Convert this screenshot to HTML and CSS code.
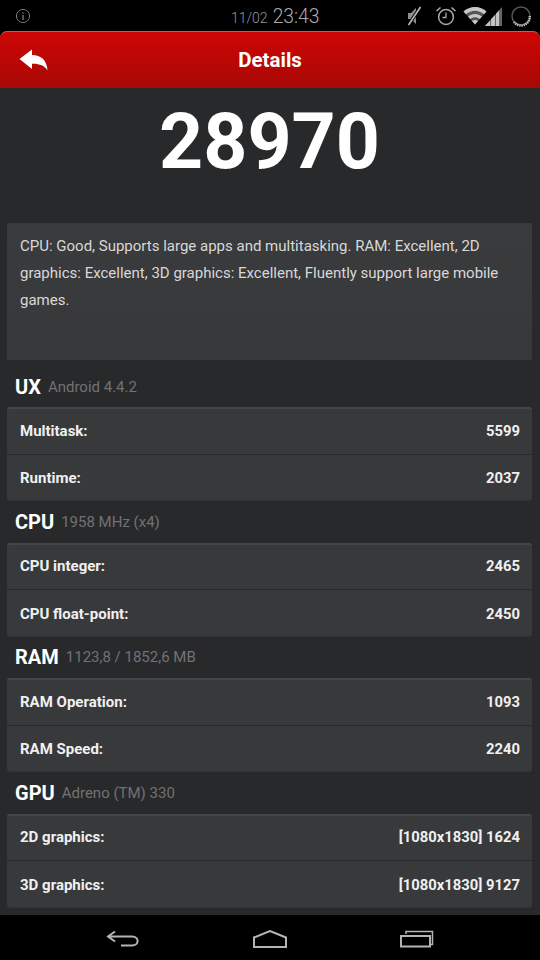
FILE: index.html
```html
<!DOCTYPE html>
<html lang="en">
<head>
<meta charset="utf-8">
<title>Details</title>
<link rel="stylesheet" href="styles.css">
</head>
<body>
<div class="phone">
  <div class="status">
    <svg class="info" viewBox="0 0 16 16" width="16" height="16"><circle cx="8" cy="8" r="6.6" fill="none" stroke="#777" stroke-width="1"/><rect x="7.4" y="7" width="1.2" height="5" fill="#888"/><rect x="7.4" y="4.4" width="1.2" height="1.3" fill="#888"/></svg>
    <div class="clock"><span class="date">11/02</span><span class="time">23:43</span></div>
    <div class="status-icons">
      <svg class="mute" viewBox="0 0 18 22" width="18" height="22"><path d="M3 8h3l5-5v16l-5-5H3z" fill="#8e8e8e"/><path d="M15.500 2 3.500 20" stroke="#000" stroke-width="3.500"/><path d="M15.500 2 3.500 20" stroke="#bbb" stroke-width="1.600"/></svg>
      <svg class="alarm" viewBox="0 0 22 22" width="22" height="22"><circle cx="11" cy="12" r="7.400" fill="none" stroke="#aaa" stroke-width="1.500"/><path d="M11 7.500V12.500H7.500" fill="none" stroke="#aaa" stroke-width="1.300"/><path d="M1.500 6 5.500 2.500M20.500 6 16.500 2.500" stroke="#aaa" stroke-width="1.600"/></svg>
      <svg viewBox="0 0 24 20" width="24" height="20"><path d="M0.500 5.500C7 -0.500 17 -0.500 23.500 5.500L12 18.500z" fill="#555"/><path d="M0.500 5.500C7 -0.500 17 -0.500 23.500 5.500L21 8.300C15.500 3.500 8.500 3.500 3 8.300zM5 10.500C9 7 15 7 19 10.500L16.800 13C13.800 10.500 10.200 10.500 7.200 13zM9 15C10.800 13.700 13.200 13.700 15 15L12 18.500z" fill="#c8c8c8"/></svg>
      <svg class="signal" viewBox="0 0 17 20" width="17" height="20"><path d="M0 20 17 1V20z" fill="#666"/><path d="M0 20 5 14.500V20zM6 20V13.300L10 9V20zM11 20V7.800L14 4.500V20z" fill="#c4c4c4"/></svg>
      <svg class="battery" viewBox="0 0 22 22" width="22" height="22"><circle cx="11" cy="11" r="9" fill="none" stroke="#555" stroke-width="1.500"/><path d="M19.800 11A8.800 8.800 0 0 1 4 17" fill="none" stroke="#c8c8c8" stroke-width="2.400" stroke-dasharray="1.300 .8"/></svg>
    </div>
  </div>
  <header class="appbar">
    <svg class="back" viewBox="0 0 30 22" width="30" height="22"><path d="M.5 10 13 .5V6C22 6 28 11 28.500 21.500 25.500 16.500 20 14.500 13 14.800V20z" fill="#fff"/></svg>
    <h1>Details</h1>
  </header>
  <main class="content">
    <div class="score">28970</div>
    <div class="summary">CPU: Good, Supports large apps and multitasking. RAM: Excellent, 2D graphics: Excellent, 3D graphics: Excellent, Fluently support large mobile games.</div>

    <div class="section first"><span class="name">UX</span><span class="sub">Android 4.4.2</span></div>
    <div class="card">
      <div class="row"><span>Multitask:</span><span class="val">5599</span></div>
      <div class="row"><span>Runtime:</span><span class="val">2037</span></div>
    </div>

    <div class="section"><span class="name">CPU</span><span class="sub">1958 MHz (x4)</span></div>
    <div class="card">
      <div class="row"><span>CPU integer:</span><span class="val">2465</span></div>
      <div class="row"><span>CPU float-point:</span><span class="val">2450</span></div>
    </div>

    <div class="section"><span class="name">RAM</span><span class="sub">1123,8 / 1852,6 MB</span></div>
    <div class="card">
      <div class="row"><span>RAM Operation:</span><span class="val">1093</span></div>
      <div class="row"><span>RAM Speed:</span><span class="val">2240</span></div>
    </div>

    <div class="section"><span class="name">GPU</span><span class="sub">Adreno (TM) 330</span></div>
    <div class="card">
      <div class="row"><span>2D graphics:</span><span class="val">[1080x1830] 1624</span></div>
      <div class="row"><span>3D graphics:</span><span class="val">[1080x1830] 9127</span></div>
    </div>
  </main>
  <nav class="navbar">
    <svg viewBox="0 0 34 18" width="34" height="18"><path d="M9 1.500 2 6.500 9 11.500M2.500 6.500H26C33.500 6.500 33.500 15.500 26 15.500H15" fill="none" stroke="#b4b4b4" stroke-width="2"/></svg>
    <svg viewBox="0 0 34 18" width="34" height="18"><path d="M1 17V7.500L17 1 33 7.500V17z" fill="none" stroke="#b4b4b4" stroke-width="2"/></svg>
    <svg viewBox="0 0 34 18" width="34" height="18"><path d="M6 4V1.500H32.500V14.500H30" fill="none" stroke="#b4b4b4" stroke-width="1.500"/><rect x="1" y="6" width="29" height="10.500" fill="none" stroke="#b4b4b4" stroke-width="2"/></svg>
  </nav>
</div>
</body>
</html>
```
FILE: styles.css
```css
* { box-sizing: border-box; }
html, body { margin: 0; padding: 0; background: #000; }
body { font-family: Roboto, "Noto Sans", sans-serif; }
.phone { width: 540px; height: 960px; display: flex; flex-direction: column; overflow: hidden; background: #000; }

.status { height: 31px; flex: none; display: flex; align-items: center; padding: 0 8px 0 15px; position: relative; }
.clock { position: absolute; left: 231px; top: 5px; display: flex; align-items: baseline; gap: 5px; color: #999; font-weight: 300; }
.date { font-size: 14px; }
.time { font-size: 19.300px; color: #aaa; }
.status-icons { margin-left: auto; display: flex; align-items: center; gap: 7px; }
.status-icons .mute { margin-right: 5px; }
.status-icons .alarm { margin-right: -1px; }
.status-icons .signal { margin-left: -9px; }
.status-icons .battery { margin-left: 1px; }

.appbar { height: 57px; flex: none; display: flex; align-items: center; justify-content: center; position: relative; border-radius: 7px 7px 0 0; border-top: 1px solid #c85a5a; background: linear-gradient(#cd0606, #a80804); }
.appbar h1 { margin: 0; color: #fff; font-size: 20.500px; font-weight: 700; }
.back { position: absolute; left: 19px; top: 17px; }

.content { flex: 1; min-height: 0; background: #28292b; padding: 0 8px 0 7px; }
.score { height: 135px; padding-top: 10px; text-align: center; color: #fff; font-size: 77px; line-height: 88px; font-weight: 700; }
.summary { height: 137px; padding: 10px 13px; background: linear-gradient(#3a3b3d, #37383a); color: #d8d8d8; font-size: 15px; line-height: 27px; border-radius: 2px 2px 0 0; }

.section { height: 41.500px; padding: 0 8px; display: flex; align-items: center; gap: 7px; }
.section.first { height: 47px; padding-top: 7px; }
.name { color: #fff; font-size: 20px; font-weight: 700; }
.sub { color: #717274; font-size: 15px; }

.card { height: 94px; border-radius: 3px; background: #38393b; box-shadow: inset 0 2px 0 #444547, inset 0 -1px 0 #323335; display: flex; flex-direction: column; }
.row { flex: 1; display: flex; align-items: center; justify-content: space-between; padding: 1px 12px 0 13px; color: #f0f0f0; font-size: 15px; font-weight: 700; }
.row .val { font-size: 14.800px; }
.row + .row { border-top: 1px solid #28292b; }

.navbar { height: 45px; flex: none; background: #000; display: flex; align-items: center; justify-content: center; gap: 113px; padding: 2px 0 0 0; }
```
